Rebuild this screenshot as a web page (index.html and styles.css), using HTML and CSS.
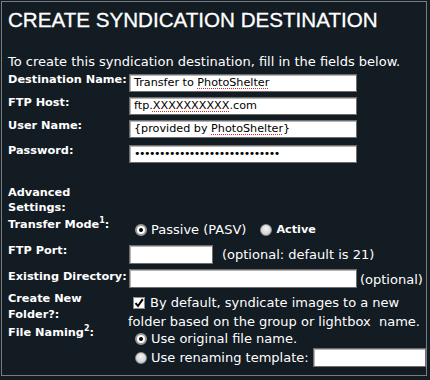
FILE: index.html
```html
<!DOCTYPE html>
<html lang="en">
<head>
  <meta charset="UTF-8" />
  <title>Create Syndication Destination</title>
  <link rel="stylesheet" href="styles.css">
</head>
<body>
  <div class="panel">
    <h1>CREATE SYNDICATION DESTINATION</h1>
    <p class="intro">To create this syndication destination, fill in the fields below.</p>

    <div class="form">
      <div class="row r1">
        <span class="label">Destination Name:</span>
        <div class="box wide">Transfer to <span class="typo">PhotoShelter</span></div>
      </div>
      <div class="row r2">
        <span class="label">FTP Host:</span>
        <div class="box wide">ftp.<span class="typo">XXXXXXXXXX</span>.com</div>
      </div>
      <div class="row r3">
        <span class="label">User Name:</span>
        <div class="box wide">{provided by <span class="typo">PhotoShelter</span>}</div>
      </div>
      <div class="row r4">
        <span class="label">Password:</span>
        <div class="box wide dots">•••••••••••••••••••••••••••••</div>
      </div>

      <div class="row adv">
        <span class="label">Advanced<br>Settings:</span>
      </div>
      <div class="row transfer">
        <span class="label">Transfer Mode<sup>1</sup>:</span>
        <div class="field inline">
          <span class="radio on"></span><span>Passive (PASV)</span>
          <span class="radio second"></span><span class="strong">Active</span>
        </div>
      </div>
      <div class="row port">
        <span class="label">FTP Port:</span>
        <div class="box short"></div>
        <span class="note port-note">(optional: default is 21)</span>
      </div>
      <div class="row dir">
        <span class="label">Existing Directory:</span>
        <div class="box wide"></div>
        <span class="note dir-note">(optional)</span>
      </div>
      <div class="row folder">
        <span class="label tall">Create New<br>Folder?:</span>
        <div class="field wrap">
          <span class="check"><svg width="10" height="10" viewBox="0 0 10 10"><path d="M1.5 5.2 L4 8 L8.8 1.2" fill="none" stroke="#000" stroke-width="2"/></svg></span>By default, syndicate images to a new<br>folder based on the group or lightbox&nbsp; name.
        </div>
      </div>
      <div class="row naming">
        <span class="label">File Naming<sup>2</sup>:</span>
        <div class="field opts">
          <div class="opt"><span class="radio on"></span><span>Use original file name.</span></div>
          <div class="opt tpl"><span class="radio"></span><span>Use renaming template:</span><div class="box tpl-box"></div></div>
        </div>
      </div>
    </div>
  </div>
</body>
</html>
```

FILE: styles.css
```css
body {
  margin: 0;
  background: #131b23;
  color: #fff;
  font-family: "DejaVu Sans", Verdana, sans-serif;
}
.panel {
  box-sizing: border-box;
  margin: 1px;
  width: 426px;
  height: 375px;
  border: 1px solid #787d82;
  padding-left: 6px;
  overflow: hidden;
}
h1 {
  margin: 0;
  padding-top: 6px;
  font-family: "Liberation Sans", Arial, sans-serif;
  font-size: 20.6px;
  line-height: 24px;
  font-weight: normal;
  -webkit-text-stroke: 0.3px #fff;
}
.intro {
  margin: 23px 0 0;
  font-size: 13px;
  line-height: 14px;
  white-space: nowrap;
}
.form {
  margin-top: 3px;
}
.row {
  display: flex;
  align-items: flex-start;
}
.label {
  width: 121px;
  flex: none;
  font-size: 11.3px;
  line-height: 15px;
  font-weight: bold;
}
.label sup {
  font-size: 8px;
  line-height: 0;
}
.label.tall {
  line-height: 16px;
}
.box {
  box-sizing: border-box;
  margin-top: 2px;
  height: 18px;
  background: #fff;
  border: 1px solid #6e6e6e;
  box-shadow: inset 1px 1px 0 #b5b5b5;
  color: #000;
  font-size: 11.2px;
  line-height: 16px;
  padding-left: 4px;
  white-space: nowrap;
  flex: none;
}
.wide { width: 228px; }
.short { width: 84px; }
.typo {
  text-decoration: underline dotted #e02020;
  text-decoration-thickness: 1px;
  text-underline-offset: 2px;
}
.dots {
  letter-spacing: -1.5px;
  font-size: 11px;
}
.r1, .r2 { height: 23px; }
.r3 { height: 25px; }
.r4 { height: 42px; }
.adv { height: 32px; }
.transfer { height: 26px; }
.port { height: 26px; }
.dir { height: 22px; }
.folder { height: 34px; }

.field {
  font-size: 13px;
  line-height: 15px;
  white-space: nowrap;
}
.inline {
  display: flex;
  align-items: center;
  padding-top: 5px;
}
.strong {
  font-weight: bold;
  font-size: 11.2px;
}
.radio {
  box-sizing: border-box;
  width: 12px;
  height: 12px;
  margin: 0 4px 0 6px;
  border-radius: 50%;
  border: 1px solid #8c8c8c;
  background: radial-gradient(circle at 50% 35%, #f4f4f4, #c4c4c4);
  display: inline-flex;
  align-items: center;
  justify-content: center;
  flex: none;
}
.radio.on {
  background: #fff;
  border: 2px solid #9a9a9a;
}
.radio.on::after {
  content: "";
  width: 4px;
  height: 4px;
  border-radius: 50%;
  background: #000;
}
.radio.second {
  margin-left: 14px;
  margin-right: 4px;
}
.note {
  font-size: 13px;
  line-height: 15px;
  white-space: nowrap;
}
.port-note {
  margin: 4px 0 0 9px;
}
.dir .box {
  margin-top: 0;
  height: 19px;
}
.port .box {
  height: 19px;
}
.dir-note {
  margin: 3px 0 0 3px;
}
.wrap {
  padding-top: 2px;
  line-height: 19px;
  margin-left: -1px;
}
.check {
  display: inline-flex;
  align-items: center;
  justify-content: center;
  box-sizing: border-box;
  width: 12px;
  height: 12px;
  margin: 0 5px 0 5px;
  vertical-align: -1px;
  background: #fff;
  border: 1px solid #8c8c8c;
}
.opts {
  padding-top: 6px;
  flex: none;
}
.opt {
  display: flex;
  align-items: center;
  height: 15px;
}
.tpl {
  height: 21px;
  margin-top: 1px;
}
.tpl-box {
  margin: 0 0 0 4px;
  width: 113px;
  height: 19px;
}
```
